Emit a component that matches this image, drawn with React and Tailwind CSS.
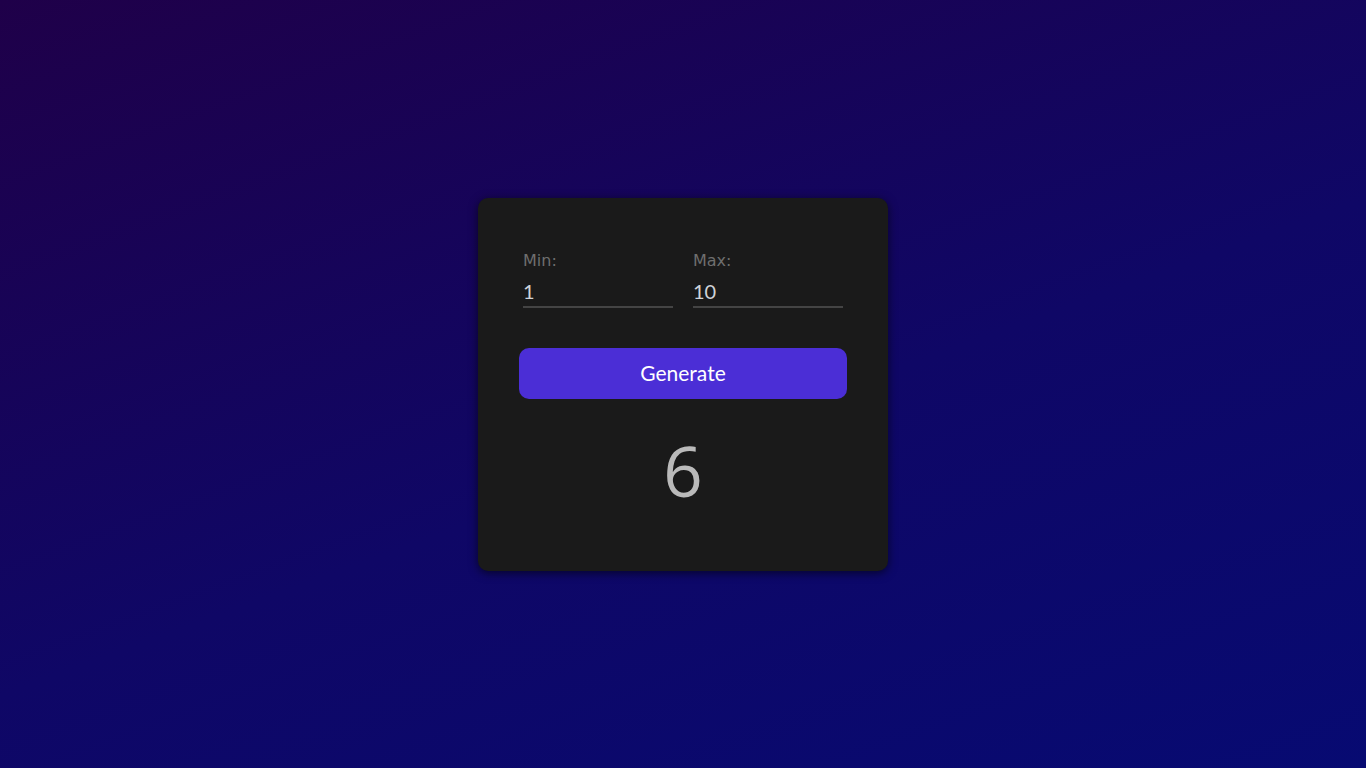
import React, { useState } from 'react';

export default function App() {
    const [min, setMin] = useState('1');
    const [max, setMax] = useState('10');
    const [result, setResult] = useState(6);

    const generate = () => {
        const lo = parseInt(min, 10) || 0;
        const hi = parseInt(max, 10) || 0;
        setResult(Math.floor(Math.random() * (hi - lo + 1)) + lo);
    };

    return (
        <div className="min-h-screen w-full flex items-center justify-center bg-[linear-gradient(160deg,#1f0049_0%,#0f0766_55%,#070a72_100%)]">
            <div className="w-[410px] h-[373px] bg-[#1a1a1a] rounded-[10px] shadow-[0_2px_10px_rgba(0,0,0,0.6)] px-[41px] pt-[53px]">
                <div className="flex gap-5 px-1">
                    <Field label="Min:" value={min} onChange={setMin} />
                    <Field label="Max:" value={max} onChange={setMax} />
                </div>
                <button
                    onClick={generate}
                    className="mt-[40px] w-full h-[51px] rounded-[10px] bg-[#4b2ed6] text-white text-[21px] font-['Lato',sans-serif]"
                >
                    Generate
                </button>
                <div className="mt-[37px] text-center text-[69px] leading-none text-[#bababa] font-['Open_Sans',sans-serif]">
                    {result}
                </div>
            </div>
        </div>
    );
}

function Field({ label, value, onChange }) {
    return (
        <div className="flex flex-col w-[150px]">
            <label className="text-[16px] text-[#6e6e6e] font-['DejaVu_Sans',sans-serif] leading-5">{label}</label>
            <input
                value={value}
                onChange={(e) => onChange(e.target.value)}
                className="mt-[8px] bg-transparent outline-none border-b-2 border-[#444] text-[#cfd3d8] text-[20px] leading-6 pb-[3px] font-['Lato',sans-serif]"
            />
        </div>
    );
}
